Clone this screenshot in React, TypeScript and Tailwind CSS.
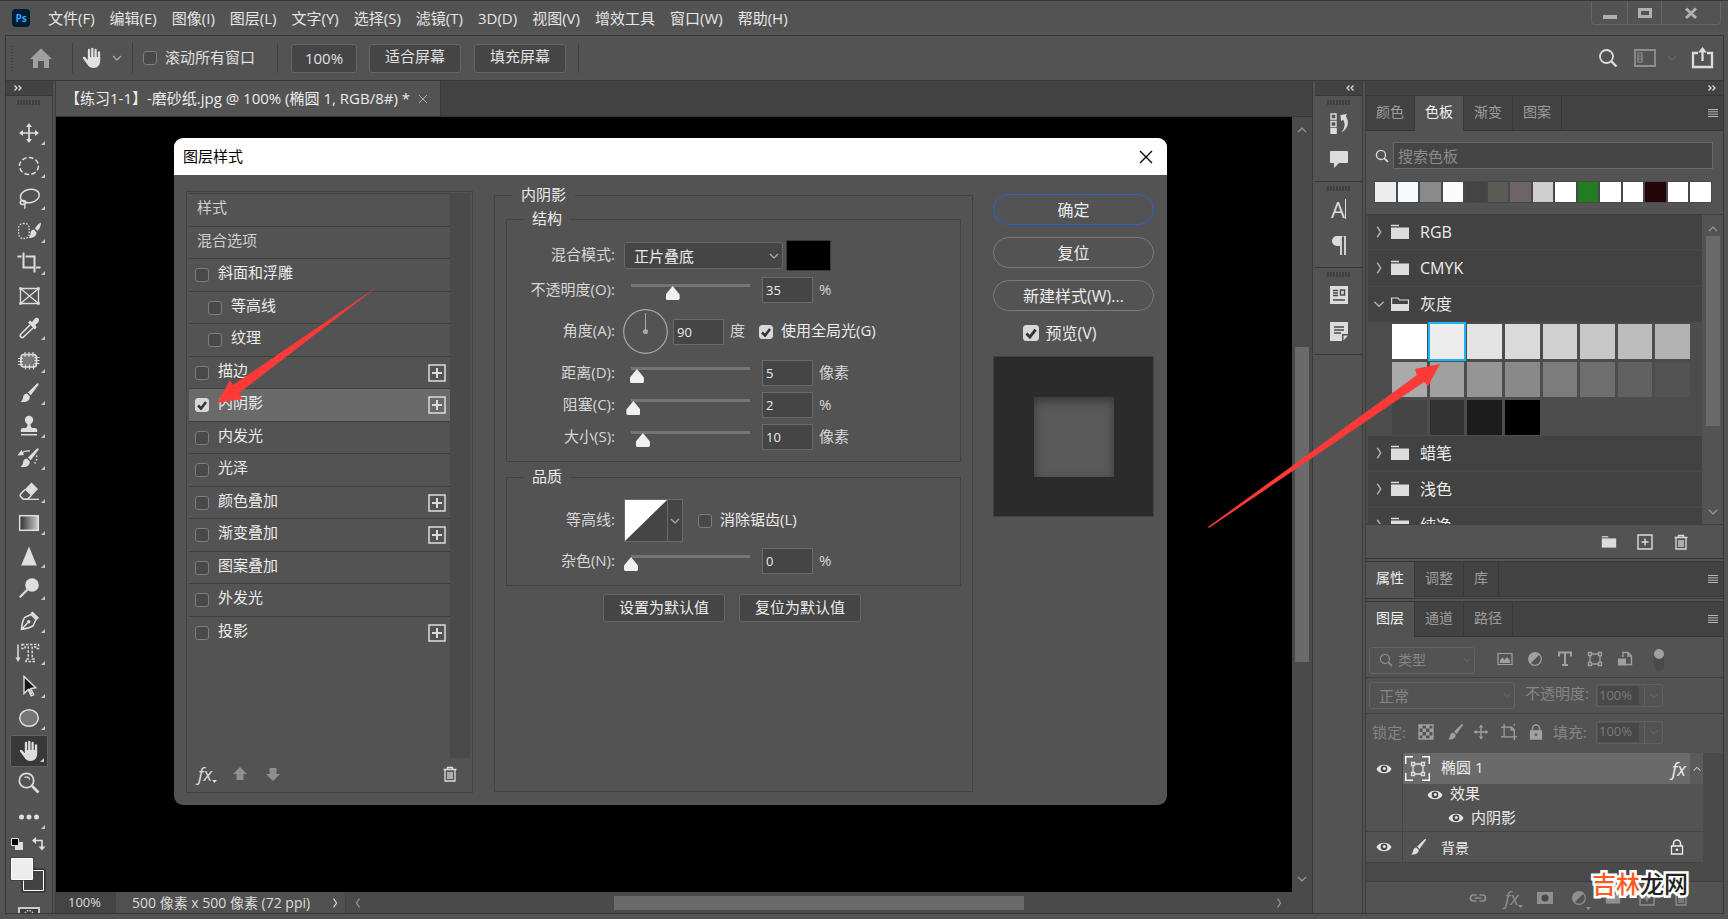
import React from 'react'

type IconProps = { className?: string; children?: React.ReactNode; box?: string }

const Icon = ({ className = 'size-6', box = '0 0 24 24', children }: IconProps) => (
  <svg viewBox={box} className={`shrink-0 ${className}`} fill="none" stroke="currentColor" strokeWidth="1.5" aria-hidden="true">
    {children}
  </svg>
)

const Chevron = ({ dir = 'down', className = 'size-3' }: { dir?: 'down' | 'up' | 'left' | 'right'; className?: string }) => {
  const paths = {
    down: 'M2 4l4 4 4-4',
    up: 'M2 8l4-4 4 4',
    left: 'M7.5 1.500L4.500 6l3 4.500',
    right: 'M4.500 1.500L7.500 6l-3 4.500',
  }
  return (
    <Icon className={className} box="0 0 12 12">
      <path d={paths[dir]} strokeWidth="1.2" />
    </Icon>
  )
}

const DoubleChevron = ({ left = false }: { left?: boolean }) => (
  <Icon className="h-[6px] w-[8px] text-[#dcdcdc]" box="0 0 8 6">
    <path d={left ? 'M3.500 .5L1 3l2.500 2.500M7.500 .5L5 3l2.500 2.500' : 'M.5 .5L3 3 .5 5.500M4.500 .5L7 3 4.500 5.500'} strokeWidth="1.300" />
  </Icon>
)

const Grip = () => (
  <div className="h-[5px] w-6 bg-[repeating-linear-gradient(90deg,#3f3f3f_0_2px,transparent_2px_3px)]" />
)

const brushPath = (
  <g fill="currentColor" stroke="none">
    <path d="M21.500 2.500c-.8-.4-1.500 0-2 .5L11 11.500l2.800 2.800L21 4.500c.5-.8.9-1.500.5-2z" />
    <path d="M10 12.500c-3 .2-3.600 2.200-4 4.500-.3 1.800-1.500 3.200-2.600 3.800 4 .8 9.300 0 9.500-5.400z" />
  </g>
)

const handPath = (
  <g>
    <path d="M9 4v9M12.300 3v9M15.600 4v9M19 6.500v8" strokeWidth="2.300" strokeLinecap="round" />
    <path fill="currentColor" stroke="none" d="M7.900 11h12.200v4c0 4-2.500 7-6.500 7-3 0-4.800-1.200-6.300-3.700L3 12.600c-.8-1.500 1-2.700 2.200-1.400l2.700 3z" />
  </g>
)

const FolderIcon = ({ open = false, className = 'h-4 w-5' }: { open?: boolean; className?: string }) => (
  <Icon className={className} box="0 0 20 16">
    {open ? (
      <path d="M1.600 14V2h6.400l1.500 2h9v5" strokeWidth="1.200" />
    ) : (
      <path d="M1 1.500h8" strokeWidth="1.500" />
    )}
    {open ? (
      <path d="M1 8h18v7H1z" fill="currentColor" stroke="none" />
    ) : (
      <path d="M1 3.500h18V15H1z" fill="currentColor" stroke="none" />
    )}
  </Icon>
)

const TrashIcon = ({ className = 'size-4' }: { className?: string }) => (
  <Icon className={className} box="0 0 16 16">
    <path d="M1.500 3.500h13M5.500 3V1.500h5V3M3 4v11h10V4M6 6v7M8 6v7M10 6v7" strokeWidth="1.300" />
  </Icon>
)

const PlusBox = ({ className = 'size-4' }: { className?: string }) => (
  <Icon className={className} box="0 0 16 16">
    <path d="M1 1h14v14H1zM8 4.500v7M4.500 8h7" strokeWidth="1.4" />
  </Icon>
)

const SearchIcon = ({ className = 'size-5' }: { className?: string }) => (
  <Icon className={className} box="0 0 20 20">
    <circle cx="8.500" cy="8.500" r="6.500" strokeWidth="1.800" />
    <path d="M13 13l5.500 5.500" strokeWidth="2.400" />
  </Icon>
)

const EyeIcon = () => (
  <Icon className="h-[10px] w-4 text-[#e6e6e6]" box="0 0 16 10">
    <path d="M.5 5C3-.8 13-.8 15.500 5 13 10.800 3 10.800 .5 5z" fill="currentColor" stroke="none" />
    <circle cx="8" cy="4.800" r="3.400" fill="#484848" stroke="none" />
    <circle cx="8.300" cy="4.400" r="1.500" fill="currentColor" stroke="none" />
  </Icon>
)

const ShapeIcon = ({ className = 'size-4' }: { className?: string }) => (
  <Icon className={className} box="0 0 16 16">
    <path d="M3 4v8M13 4v8M4 3h8M4 13h8" strokeWidth="1.300" />
    <path d="M1.500 1.500h3v3h-3zM11.500 1.500h3v3h-3zM1.500 11.500h3v3h-3zM11.500 11.500h3v3h-3z" strokeWidth="1.300" />
  </Icon>
)

const AdjustIcon = ({ className = 'size-4' }: { className?: string }) => (
  <Icon className={className} box="0 0 16 16">
    <circle cx="8" cy="8" r="6.300" strokeWidth="1.200" />
    <path d="M12.500 3.500A6.300 6.300 0 1 0 3.500 12.500z" fill="currentColor" stroke="none" />
  </Icon>
)

const LockIcon = ({ solid = false, className = 'size-4' }: { solid?: boolean; className?: string }) => (
  <Icon className={className} box="0 0 16 16">
    <path d="M4.500 7V4.500a3.500 3.500 0 0 1 7 0V7" strokeWidth="1.500" />
    <path d="M2.500 7h11v8h-11z" fill={solid ? 'currentColor' : 'none'} strokeWidth="1.300" />
    <circle cx="8" cy="10.800" r="1.300" fill={solid ? '#535353' : 'currentColor'} stroke="none" />
  </Icon>
)

const MoveIcon = ({ className = 'size-6' }: { className?: string }) => (
  <Icon className={className}>
    <path d="M12 4v16M4 12h16" strokeWidth="1.700" />
    <path fill="currentColor" stroke="none" d="M12 2l3 4H9zM12 22l3-4H9zM2 12l4-3v6zM22 12l-4-3v6z" />
  </Icon>
)

const tools: { name: string; icon: React.ReactNode; corner?: boolean; active?: boolean }[] = [
  { name: '移动工具', corner: true, icon: <MoveIcon /> },
  { name: '椭圆选框工具', corner: true, icon: <Icon><ellipse cx="12" cy="12" rx="9.500" ry="8.500" strokeDasharray="4.700 2.300" /></Icon> },
  {
    name: '套索工具',
    corner: true,
    icon: (
      <Icon>
        <ellipse cx="12.800" cy="10" rx="9.600" ry="6.600" transform="rotate(-12 12.800 10)" />
        <ellipse cx="6" cy="16.500" rx="2.800" ry="1.900" />
        <path d="M6.500 18c2 1.500 2 3 .8 4.600" strokeWidth="1.300" />
      </Icon>
    ),
  },
  {
    name: '快速选择工具',
    corner: true,
    icon: (
      <Icon>
        <rect x="1.700" y="4.500" width="10.500" height="15" rx="4.500" strokeDasharray="1.500 1.500" strokeWidth="1.300" />
        <path d="M24 3.500c-3 1.500-4.800 4-6 6l2.500 2.500C22.500 9.500 24 7 24 3.500zM17 10.500c-2 0-3.300 1.500-3.500 4-.1 1.500-.8 3-2 4.500 4 .3 8-1.500 8-5.500z" fill="currentColor" stroke="none" />
      </Icon>
    ),
  },
  { name: '裁剪工具', corner: true, icon: <Icon><path d="M.5 5.500h4M6.500 1.500v15h10M8.500 5.500H17.500v16M19 16.500h4.500" strokeWidth="2" /></Icon> },
  {
    name: '图框工具',
    icon: (
      <Icon>
        <path d="M3.500 4.500h18v15h-18zM3.500 4.500l18 15M21.500 4.500l-18 15" strokeWidth="1.300" />
        <path d="M2.500 3.500h2v2h-2zM20.500 3.500h2v2h-2zM2.500 18.500h2v2h-2zM20.500 18.500h2v2h-2z" fill="currentColor" strokeWidth=".5" />
      </Icon>
    ),
  },
  {
    name: '吸管工具',
    corner: true,
    icon: (
      <Icon>
        <path d="M13 9L4 18c-2 2.500.5 4.500 2.500 3L16 12" strokeWidth="1.600" />
        <path d="M11 6.500l2-2 2 1.500 2.500-3c3-3 6 .5 3.700 3.500l-3 2.500 1.500 2.500-2 2z" fill="currentColor" stroke="none" />
      </Icon>
    ),
  },
  {
    name: '修补工具',
    corner: true,
    icon: (
      <Icon>
        <rect x="4" y="5.500" width="15.500" height="12.500" rx="3" fill="#777" strokeWidth="1.600" />
        <path d="M8 3v5M12 3v5M16 3v5M8.500 15.500v5M12.500 15.500v5M16.500 15.500v5M1 9.500h5M1 12.500h5M1 15.500h5M17.500 8.500h5M17.500 11.500h5M17.500 14.500h5" strokeWidth="1.100" />
      </Icon>
    ),
  },
  { name: '画笔工具', corner: true, icon: <Icon>{brushPath}</Icon> },
  {
    name: '仿制图章工具',
    corner: true,
    icon: (
      <Icon>
        <circle cx="12" cy="6" r="4.200" fill="currentColor" stroke="none" />
        <path d="M10.500 9h3c0 3 0 4 2 5h2.500c1.500 0 2.200 1 2.200 2.500v1.500H3.800v-1.500C3.800 15 4.500 14 6 14h2.500c2-1 2-2 2-5z" fill="currentColor" stroke="none" />
        <path d="M4 20.700h16" />
      </Icon>
    ),
  },
  {
    name: '历史记录画笔工具',
    corner: true,
    icon: (
      <Icon>
        {brushPath}
        <path d="M4 7.500c2-2 5-3 9-2.500" strokeWidth="1.300" />
        <path d="M.5 9.500L4.500 4l2.500 5z" fill="currentColor" stroke="none" />
        <path d="M19.500 9.500c1 3 0 7-3.500 9" strokeWidth="1.500" strokeDasharray="1.500 2" />
      </Icon>
    ),
  },
  {
    name: '橡皮擦工具',
    corner: true,
    icon: (
      <Icon>
        <path d="M14.500 3.500l6.500 6.500-6.500 7-6.700-6.500z" fill="currentColor" stroke="none" />
        <path d="M8 10.500l-4.500 4.700c-.7.800-.7 1.500 0 2.200l2.800 2.800h4.200l4-4" strokeWidth="1.500" />
        <path d="M6 20.300h16" strokeWidth="1.300" />
      </Icon>
    ),
  },
  {
    name: '渐变工具',
    corner: true,
    icon: (
      <Icon>
        <defs>
          <linearGradient id="toolGradient"><stop offset="0" stopColor="#2c2c2c" /><stop offset="1" stopColor="#d0d0d0" /></linearGradient>
        </defs>
        <rect x="2.700" y="4.700" width="18.600" height="14.600" fill="url(#toolGradient)" />
      </Icon>
    ),
  },
  { name: '锐化工具', corner: true, icon: <Icon><path d="M12 2.500L19.800 21.500H4.200z" fill="currentColor" stroke="none" /></Icon> },
  { name: '减淡工具', corner: true, icon: <Icon><circle cx="15" cy="9" r="6.800" fill="currentColor" stroke="none" /><path d="M10.500 13.500L2.800 21.300" strokeWidth="2.200" /></Icon> },
  {
    name: '钢笔工具',
    corner: true,
    icon: (
      <Icon>
        <path d="M4.500 20.500c.2-5 .7-8 3-12l6.500-3 5 5-3 6.500c-4 2.300-7 3-11.500 3.500zM4.500 20.500l6-6.500" strokeWidth="1.500" />
        <circle cx="11.700" cy="12.800" r="1.700" fill="currentColor" stroke="none" />
        <path d="M13.500 4l2-1.500 6.500 6.200-1.800 2z" fill="currentColor" stroke="none" />
      </Icon>
    ),
  },
  {
    name: '直排文字蒙版工具',
    corner: true,
    icon: (
      <Icon className="h-6 w-7" box="-2 0 28 24">
        <path d="M1 3.500v14" strokeWidth="1.500" />
        <path d="M-1.500 16.500h5L1 21z" fill="currentColor" stroke="none" />
        <path d="M5 3.500h16.500v4h-3v-1.500h-3.300v12h2v2.500H9v-2.500h2.300V6H8v1.500H5z" strokeDasharray="2.500 1.500" strokeWidth="1.400" />
      </Icon>
    ),
  },
  { name: '路径选择工具', corner: true, icon: <Icon><path d="M7 2.500v17l4.200-4 3 6.300 2.500-1.200-2.900-6.100 5-.8z" fill="#161616" strokeWidth="1.400" /><path d="M12 15l2.500 5.500" strokeWidth="2.200" /></Icon> },
  { name: '椭圆工具', corner: true, icon: <Icon><ellipse cx="12" cy="12" rx="9.300" ry="8.300" fill="#777" /></Icon> },
  { name: '抓手工具', corner: true, active: true, icon: <Icon>{handPath}</Icon> },
  {
    name: '缩放工具',
    icon: (
      <Icon>
        <circle cx="9.500" cy="9.500" r="7.200" strokeWidth="1.700" />
        <path d="M15 15l6.500 6.500" strokeWidth="2.700" />
        <path d="M7.500 6.500c2-1.200 4.500-.5 5.300 2" strokeWidth="1.200" />
      </Icon>
    ),
  },
]

const Toolbar = () => (
  <aside className="flex w-[47px] shrink-0 flex-col overflow-hidden border-r border-[#3a3a3a]">
    <div className="flex h-[15px] shrink-0 items-center border-b border-[#383838] bg-[#424242] pl-2">
      <DoubleChevron />
    </div>
    <div className="flex h-[21px] shrink-0 justify-center pt-1"><Grip /></div>
    <div className="flex h-[682px] shrink-0 flex-col justify-between">
      {tools.map((t) => (
        <button
          key={t.name}
          aria-label={t.name}
          className={`relative mx-1 flex h-8 items-center justify-center text-[#dedede] ${t.active ? 'rounded-xs border border-[#626262] bg-[#383838]' : ''}`}
        >
          {t.icon}
          {t.corner && <Icon className="absolute bottom-1 right-[3px] size-1" box="0 0 4 4"><path d="M4 0v4H0z" fill="#c8c8c8" stroke="none" /></Icon>}
        </button>
      ))}
    </div>
    <button aria-label="编辑工具栏" className="relative mx-1 flex h-9 shrink-0 items-center justify-center text-[#dedede]">
      <Icon><g fill="currentColor" stroke="none"><circle cx="4.500" cy="12" r="2.500" /><circle cx="12" cy="12" r="2.500" /><circle cx="19.500" cy="12" r="2.500" /></g></Icon>
      <Icon className="absolute bottom-[6px] right-[3px] size-1" box="0 0 4 4"><path d="M4 0v4H0z" fill="#c8c8c8" stroke="none" /></Icon>
    </button>
    <Icon className="ml-1 mt-[2px] h-[14px] w-9 text-[#dedede]" box="0 0 36 14">
      <path d="M5 5h8v8H5z" fill="currentColor" stroke="none" />
      <path d="M1.500 1.500h7v7h-7z" fill="#000" strokeWidth="1" />
      <path d="M24.500 3.500h7.500v7" strokeWidth="1.600" />
      <path d="M26 0v7l-4-3.500zM28.500 9.500h7L32 13.500z" fill="currentColor" stroke="none" />
    </Icon>
    <Icon className="ml-1 mt-[5px] h-[37px] w-9" box="0 0 36 37">
      <path d="M12.500 13.500h22v22h-22z" fill="#404040" stroke="#333" strokeWidth="2" />
      <path d="M13.500 14.500h20v20h-20z" fill="#434343" stroke="#fff" strokeWidth="1" />
      <path d="M.5 1.500h23v23H.5z" fill="#333" stroke="none" />
      <path d="M1.500 2.500h21v21h-21z" fill="#ededed" stroke="#fff" strokeWidth="1" />
    </Icon>
    <Icon className="ml-3 mt-[14px] h-[15px] w-[22px] text-[#c8c8c8]" box="0 0 22 15">
      <path d="M1 1h20v13H1z" fill="#3c3c3c" strokeWidth="2" />
      <circle cx="11" cy="7.500" r="4" strokeDasharray="1.500 1.200" />
    </Icon>
  </aside>
)

const Check = ({ id, checked = false, large = false }: { id: string; checked?: boolean; large?: boolean }) => (
  <span className="relative flex shrink-0">
    <input
      id={id}
      type="checkbox"
      defaultChecked={checked}
      className={`peer appearance-none rounded-[3px] border border-[#7d7d7d] bg-[#494949] checked:border-[#d8d8d8] checked:bg-[#d8d8d8] ${large ? 'size-4' : 'size-[14px]'}`}
    />
    <svg viewBox="0 0 14 14" className="pointer-events-none absolute inset-0 hidden peer-checked:block" fill="none" stroke="#333" strokeWidth="2.500">
      <path d="M3 7.500l3 3L11 4" />
    </svg>
  </span>
)

const menus = ['文件(F)', '编辑(E)', '图像(I)', '图层(L)', '文字(Y)', '选择(S)', '滤镜(T)', '3D(D)', '视图(V)', '增效工具', '窗口(W)', '帮助(H)']

const MenuBar = () => (
  <header className="flex h-[34px] shrink-0 items-center">
    <div className="ml-[7px] flex size-[18px] items-center justify-center rounded-[4px] bg-[#001d34] text-[10px] font-bold text-[#31a8ff]">Ps</div>
    <nav className="ml-[18px] flex flex-1 gap-[15px] whitespace-nowrap text-[15px] text-[#e6e6e6]">
      {menus.map((m) => <button key={m}>{m}</button>)}
    </nav>
    <div className="mr-[3px] flex h-6 self-start divide-x divide-[#666] rounded-b-[4px] border border-t-0 border-[#666] text-[#b0b0b0]">
      <button aria-label="最小化" className="flex w-9 items-center justify-center"><Icon className="h-4 w-[14px]" box="0 0 14 16"><path d="M0 12h14" strokeWidth="4" /></Icon></button>
      <button aria-label="最大化" className="flex w-[34px] items-center justify-center"><Icon className="h-4 w-[14px]" box="0 0 14 16"><path d="M1.500 4.500h11v7h-11z" strokeWidth="3" /></Icon></button>
      <button aria-label="关闭" className="flex w-[58px] items-center justify-center"><Icon className="h-4 w-[14px]" box="0 0 14 16"><path d="M2 3.500l10 9.500M12 3.500L2 13" strokeWidth="3" /></Icon></button>
    </div>
  </header>
)

const Divider = () => <div className="h-[30px] w-px shrink-0 bg-[#404040]" />

const OptionsBar = () => (
  <div className="flex h-[45px] shrink-0 items-center border-b border-[#383838] text-[15px] text-[#e0e0e0]">
    <div className="ml-[5px] h-[25px] w-[2px] bg-[repeating-linear-gradient(180deg,#3f3f3f_0_1px,transparent_1px_3px)]" />
    <button aria-label="主页" className="ml-4 mr-[19px] text-[#a0a0a0]">
      <Icon className="h-[22px] w-6" box="0 0 24 22"><path d="M12 1.500L23 12h-3v9h-5v-7H9v7H4v-9H1z" fill="currentColor" stroke="none" /></Icon>
    </button>
    <Divider />
    <button aria-label="抓手工具" className="ml-[7px] flex items-center gap-[7px]">
      <Icon>{handPath}</Icon>
      <Chevron className="size-3 text-[#b0b0b0]" />
    </button>
    <div className="ml-[9px]"><Divider /></div>
    <div className="ml-[10px] mr-[22px] flex items-center gap-2">
      <Check id="scroll-all" />
      <label htmlFor="scroll-all" className="pb-[2px]">滚动所有窗口</label>
    </div>
    <Divider />
    <button className="ml-[13px] h-[29px] w-[66px] rounded-[3px] border border-[#666] bg-[#454545]">100%</button>
    <button className="ml-3 h-[29px] w-[92px] rounded-[3px] border border-[#666] bg-[#454545] pb-[3px]">适合屏幕</button>
    <button className="ml-[13px] mr-3 h-[29px] w-[92px] rounded-[3px] border border-[#666] bg-[#454545] pb-[3px]">填充屏幕</button>
    <Divider />
    <div className="ml-auto mr-[9px] flex items-center text-[#dcdcdc]">
      <button aria-label="搜索"><SearchIcon /></button>
      <button aria-label="工作区" className="ml-4 flex items-center gap-[10px] text-[#8f8f8f]">
        <Icon className="h-[18px] w-[22px]" box="0 0 22 18"><path d="M1 1h20v16H1z" strokeWidth="1.800" /><path d="M4 4h4v9H4zM4 7h4M4 10h4" strokeWidth="1.200" /></Icon>
        <Chevron className="size-3 text-[#686868]" />
      </button>
      <button aria-label="共享" className="ml-[13px]">
        <Icon className="h-[22px] w-[23px]" box="0 0 23 22"><path d="M7 6H2v14h19V6h-5M11.500 14V5" strokeWidth="2.300" /><path d="M11.500 0l4.500 5.500H7z" fill="currentColor" stroke="none" /></Icon>
      </button>
    </div>
  </div>
)

const effects = [
  { name: '斜面和浮雕' },
  { name: '等高线', indent: true },
  { name: '纹理', indent: true },
  { name: '描边', plus: true },
  { name: '内阴影', plus: true, active: true },
  { name: '内发光' },
  { name: '光泽' },
  { name: '颜色叠加', plus: true },
  { name: '渐变叠加', plus: true },
  { name: '图案叠加' },
  { name: '外发光' },
  { name: '投影', plus: true },
]

const StyleList = () => (
  <section className="mt-4 flex w-[287px] flex-col border border-[#434343] p-[2px] pt-px">
    <div className="flex flex-1">
      <ul className="flex-1 text-[15px] text-[#ececec]">
        <li className="flex h-[33px] items-center border-t border-[#3e3e3e] pb-[6px] pl-2 text-[#cfcfcf]">样式</li>
        <li className="flex h-8 items-center border-t border-[#3e3e3e] pb-[5px] pl-2 text-[#cfcfcf]">混合选项</li>
        {effects.map((e) => (
          <li
            key={e.name}
            className={`flex items-center gap-[9px] border-t border-[#3e3e3e] pr-1 odd:h-[33px] even:h-8 ${e.indent ? 'pl-[19px]' : 'pl-[6px]'} ${e.active ? 'bg-[#6a6a6a]' : ''}`}
          >
            <Check id={e.name} checked={e.active} />
            <label htmlFor={e.name} className="flex-1 pb-[5px]">{e.name}</label>
            {e.plus && (
              <button aria-label={`添加${e.name}`}>
                <Icon className="size-[18px] text-[#dcdcdc]" box="0 0 18 18"><path d="M1 1h16v16H1z" strokeWidth="1.500" /><path d="M9 4v10M4 9h10" strokeWidth="2" /></Icon>
              </button>
            )}
          </li>
        ))}
      </ul>
      <div className="w-5 bg-[#4a4a4a]" />
    </div>
    <div className="flex h-8 items-center pl-[9px] pr-3 text-[#dcdcdc]">
      <button className="flex items-end text-[18px] italic leading-5">
        fx<Icon className="mb-[1px] h-[3px] w-[5px]" box="0 0 5 3"><path d="M0 0h5L2.500 3z" fill="currentColor" stroke="none" /></Icon>
      </button>
      <button aria-label="上移" className="ml-[15px] text-[#8f8f8f]"><Icon className="size-4" box="0 0 16 16"><path d="M8 1l7 7h-3.500v6h-7V8H1z" fill="currentColor" stroke="none" /></Icon></button>
      <button aria-label="下移" className="ml-[17px] text-[#8f8f8f]"><Icon className="size-4" box="0 0 16 16"><path d="M8 15l7-7h-3.500V2h-7v6H1z" fill="currentColor" stroke="none" /></Icon></button>
      <button aria-label="删除" className="ml-auto"><TrashIcon className="size-4" /></button>
    </div>
  </section>
)

const fieldInput = 'h-[26px] w-[51px] border border-[#6a6a6a] bg-[#454545] pl-[3px] text-[13px] text-[#ececec] outline-none'

const SliderRow = ({ id, label, value, unit }: { id: string; label: string; value: number; unit: string }) => (
  <div className="flex h-[26px] items-center text-[#d6d6d6]">
    <label htmlFor={id} className="mr-[9px] w-[108px] pb-[2px] text-right">{label}</label>
    <div className="relative mr-[5px] h-[26px] w-[133px]">
      <span className="absolute inset-x-[7px] top-[7px] h-[3px] bg-[#757575]" />
      <input
        type="range"
        aria-label={label}
        defaultValue={value}
        className="absolute inset-x-0 top-[9px] h-[14px] w-full appearance-none bg-transparent [&::-webkit-slider-thumb]:h-[14px] [&::-webkit-slider-thumb]:w-[14px] [&::-webkit-slider-thumb]:appearance-none [&::-webkit-slider-thumb]:bg-[#f0f0f0] [&::-webkit-slider-thumb]:[clip-path:polygon(50%_0,100%_60%,100%_92%,92%_100%,8%_100%,0_92%,0_60%)]"
      />
    </div>
    <input id={id} defaultValue={value} className={fieldInput} />
    <span className="ml-[6px] pb-[2px]">{unit}</span>
  </div>
)

const InnerShadow = () => (
  <fieldset className="mb-px mt-[9px] flex-1 border border-[#434343] px-[11px] text-[15px] text-[#ececec]">
    <legend className="ml-[6px] px-[9px] pb-[2px] leading-5">内阴影</legend>
    <fieldset className="mt-[2px] border border-[#434343] pb-[11px] pt-[10px]">
      <legend className="ml-[17px] px-[8px] pb-[2px] leading-5">结构</legend>
      <div className="flex flex-col gap-[6px]">
        <div className="flex h-[31px] items-center text-[#d6d6d6]">
          <label htmlFor="blend" className="mr-[9px] w-[108px] pb-[2px] text-right">混合模式:</label>
          <div className="relative">
            <select id="blend" className="h-[27px] w-[159px] appearance-none rounded-[3px] border border-[#666] bg-[#454545] pl-[9px] leading-6 text-[#ececec]">
              <option>正片叠底</option>
            </select>
            <Chevron className="pointer-events-none absolute right-[3px] top-2 size-3 text-[#b0b0b0]" />
          </div>
          <button aria-label="阴影颜色" className="ml-[3px] h-[31px] w-[45px] border border-[#3a3a3a] bg-black" />
        </div>
        <SliderRow id="opacity" label="不透明度(O):" value={35} unit="%" />
        <div className="flex h-[45px] items-center text-[#d6d6d6]">
          <label htmlFor="angle" className="mr-[8px] w-[108px] pb-[2px] text-right">角度(A):</label>
          <Icon className="size-[45px] text-[#a8a8a8]" box="0 0 45 45">
            <circle cx="22.500" cy="22.500" r="21.800" strokeWidth="1.200" />
            <path d="M22.500 22V4" strokeWidth="1" />
            <circle cx="22.500" cy="22.500" r="2.600" fill="currentColor" stroke="none" />
          </Icon>
          <input id="angle" defaultValue="90" className={`ml-[5px] ${fieldInput}`} />
          <span className="ml-[6px] mr-[14px] pb-[2px]">度</span>
          <Check id="global-light" checked />
          <label htmlFor="global-light" className="ml-2 pb-[2px] text-[#ececec]">使用全局光(G)</label>
        </div>
        <SliderRow id="distance" label="距离(D):" value={5} unit="像素" />
        <SliderRow id="choke" label="阻塞(C):" value={2} unit="%" />
        <SliderRow id="size" label="大小(S):" value={10} unit="像素" />
      </div>
    </fieldset>
    <fieldset className="mt-[4px] border border-[#434343] pb-[11px] pt-[11px]">
      <legend className="ml-[17px] px-[8px] pb-[2px] leading-5">品质</legend>
      <div className="mb-[6px] flex h-[43px] items-center text-[#d6d6d6]">
        <span className="mr-[9px] w-[108px] pb-[2px] text-right">等高线:</span>
        <button aria-label="等高线" className="flex h-[43px] w-[59px] border border-[#6a6a6a] bg-[#454545]">
          <svg viewBox="0 0 42 41" className="h-[41px] w-[42px]" aria-hidden="true"><path d="M0 0h42L0 41z" fill="#fff" /></svg>
          <span className="flex h-full flex-1 items-center justify-center border-l border-[#6a6a6a] text-[#b0b0b0]"><Chevron className="size-3" /></span>
        </button>
        <span className="w-[15px]" />
        <Check id="anti-alias" />
        <label htmlFor="anti-alias" className="ml-2 pb-[2px] text-[#ececec]">消除锯齿(L)</label>
      </div>
      <SliderRow id="noise" label="杂色(N):" value={0} unit="%" />
    </fieldset>
    <div className="mt-2 flex justify-center gap-[14px] pr-[3px]">
      <button className="h-7 w-[122px] rounded-[3px] border border-[#666] bg-[#454545] pb-[3px] leading-6">设置为默认值</button>
      <button className="h-7 w-[122px] rounded-[3px] border border-[#666] bg-[#454545] pb-[3px] leading-6">复位为默认值</button>
    </div>
  </fieldset>
)

const LayerStyleDialog = () => (
  <div role="dialog" aria-label="图层样式" className="absolute left-[118px] top-[21px] flex h-[667px] w-[993px] flex-col overflow-hidden rounded-[9px] bg-[#535353]">
    <div className="flex h-[37px] shrink-0 items-center justify-between bg-white pl-[9px] pr-[14px] text-[15px] text-black">
      <span>图层样式</span>
      <button aria-label="关闭"><Icon className="size-[14px]" box="0 0 14 14"><path d="M1 1l12 12M13 1L1 13" strokeWidth="1.300" /></Icon></button>
    </div>
    <div className="flex flex-1 pb-3 pl-3 pr-[13px]">
      <StyleList />
      <div className="ml-[21px] flex flex-1"><InnerShadow /></div>
      <div className="ml-5 mt-[19px] flex w-[161px] flex-col items-center text-[16px] text-[#ececec]">
        <button className="h-[31px] w-full rounded-full border border-[#2b62c9]">确定</button>
        <button className="mt-3 h-[31px] w-full rounded-full border border-[#7a7a7a]">复位</button>
        <button className="mt-3 h-[31px] w-full rounded-full border border-[#7a7a7a]">新建样式(W)...</button>
        <div className="mt-[9px] flex items-center gap-[7px] pb-[10px] pr-7 leading-[26px]">
          <Check id="preview" checked large />
          <label htmlFor="preview">预览(V)</label>
        </div>
        <div className="flex h-[161px] w-full items-center justify-center border border-[#434343] bg-[#2b2b2b]">
          <div className="size-20 bg-[#595959] shadow-[inset_0_4px_10px_#383838]" />
        </div>
      </div>
    </div>
  </div>
)

const DocumentArea = () => (
  <main className="ml-[2px] flex min-w-0 flex-1 flex-col border-x border-[#3a3a3a]">
    <div className="flex h-9 shrink-0 border-b border-[#383838] bg-[#424242]">
      <div className="flex items-center whitespace-nowrap border-r border-[#383838] bg-[#535353] pl-[9px] pr-3 text-[15px] text-[#ececec]">
        【练习1-1】-磨砂纸.jpg @ 100% (椭圆 1, RGB/8#) *
        <button aria-label="关闭文档" className="ml-2 text-[#a8a8a8]"><Icon className="size-[10px]" box="0 0 10 10"><path d="M1 1l8 8M9 1L1 9" strokeWidth="1" /></Icon></button>
      </div>
    </div>
    <div className="flex min-h-0 flex-1">
      <div className="relative min-w-0 flex-1 bg-black"><LayerStyleDialog /></div>
      <div className="flex w-5 flex-col items-center bg-[#4a4a4a] py-[7px] text-[#9a9a9a]">
        <Chevron dir="up" />
        <div className="mt-[211px] h-[315px] w-[14px] bg-[#6a6a6a]" />
        <div className="mt-auto"><Chevron /></div>
      </div>
    </div>
    <div className="flex h-[21px] shrink-0 items-center bg-[#4a4a4a] text-[#dcdcdc]">
      <span className="flex h-full w-[60px] items-center bg-[#444] pl-3 text-[13px]">100%</span>
      <span className="flex h-full w-[230px] items-center justify-between whitespace-nowrap border-r border-[#434343] bg-[#505050] pl-4 pr-[4px] text-[14px]">
        500 像素 x 500 像素 (72 ppi)
        <Chevron dir="right" />
      </span>
      <span className="ml-[6px] text-[#9a9a9a]"><Chevron dir="left" /></span>
      <div className="ml-[250px] h-[14px] w-[410px] bg-[#6a6a6a]" />
      <span className="ml-auto mr-[27px] text-[#9a9a9a]"><Chevron dir="right" /></span>
    </div>
  </main>
)

const stripButton = 'flex h-9 w-full items-center justify-center'

const IconStrip = () => (
  <aside className="ml-[2px] flex w-12 shrink-0 flex-col border-r border-[#3a3a3a] text-[#dcdcdc]">
    <div className="flex h-[15px] items-center justify-end border-b border-[#383838] bg-[#424242] pr-2"><DoubleChevron left /></div>
    <div className="flex h-[86px] flex-col items-center border-b border-[#383838] pt-1">
      <Grip />
      <button aria-label="历史记录" className={stripButton}>
        <Icon className="size-6">
          <path d="M4 3h5v5H4zM4 10.500h5v5H4z" strokeWidth="1.400" />
          <path d="M3.300 17h6.500v6H3.300z" fill="currentColor" stroke="none" />
          <path d="M13.500 4L20 3l-1.200 2.200c4 6 2 13-4.300 16 3.500-4.500 4-9 1.500-12.500L14 10z" fill="currentColor" stroke="none" />
        </Icon>
      </button>
      <button aria-label="注释" className={stripButton}>
        <Icon className="size-6"><path d="M4 4h16q1 0 1 1v10q0 1-1 1h-8l-5 5v-5H4q-1 0-1-1V5q0-1 1-1z" fill="currentColor" stroke="none" /></Icon>
      </button>
    </div>
    <div className="flex h-[86px] flex-col items-center border-b border-[#383838] pt-1">
      <Grip />
      <button aria-label="字符" className={stripButton}>
        <span className="text-[22px] leading-6">A</span>
        <span className="h-5 w-px bg-[#dcdcdc]" />
      </button>
      <button aria-label="段落" className={stripButton}>
        <Icon className="size-6"><path d="M19 3H10a5 5 0 0 0 0 10h3V4" fill="currentColor" stroke="none" /><path d="M14 3v19M18 3v19" strokeWidth="1.800" /></Icon>
      </button>
    </div>
    <div className="flex h-[87px] flex-col items-center border-b border-[#383838] pt-1">
      <Grip />
      <button aria-label="库" className={stripButton}>
        <Icon className="size-6"><path d="M3 3h18v18H3z" fill="currentColor" stroke="none" /><path d="M6 7.500h5M6 10h5M6 12.500h5M6 17h12M13.500 7h4v5h-4z" stroke="#484848" strokeWidth="1.500" /></Icon>
      </button>
      <button aria-label="注解" className={stripButton}>
        <Icon className="size-6"><path d="M3 3h18v12h-6v7H3z" fill="currentColor" stroke="none" /><path d="M16.500 21.500v-5h4.500z" fill="currentColor" stroke="none" /><path d="M7 8h10M7 11h10M7 14h7" stroke="#484848" strokeWidth="1.300" /></Icon>
      </button>
    </div>
  </aside>
)

const Tabs = ({ items, active }: { items: string[]; active: number }) => (
  <div className="flex h-[35px] shrink-0 items-stretch bg-[#424242] text-[14px] text-[#9d9d9d]">
    {items.map((t, i) => (
      <button
        key={t}
        className={`border-r border-[#383838] px-[10px] pb-[4px] ${i === active ? 'bg-[#535353] text-[#f2f2f2]' : 'border-b'}`}
      >
        {t}
      </button>
    ))}
    <div className="flex flex-1 items-center justify-end border-b border-[#383838] pr-[5px]">
      <button aria-label="面板菜单"><Icon className="h-2 w-[10px] text-[#b8b8b8]" box="0 0 10 8"><path d="M0 .5h10M0 2.800h10M0 5.200h10M0 7.500h10" strokeWidth="1" /></Icon></button>
    </div>
  </div>
)

const recent = ['#ededed', '#f5faff', '#8a8a8a', '#fcfafc', '#444444', '#5b5a57', '#6f6464', '#d0cece', '#ffffff', '#227d22', '#ffffff', '#ffffff', '#240606', '#ffffff', '#ffffff']
const grays = ['#ffffff', '#ededed', '#e3e3e3', '#dadada', '#d0d0d0', '#c7c7c7', '#bdbdbd', '#b3b3b3', '#aaaaaa', '#a0a0a0', '#959595', '#898989', '#7c7c7c', '#6e6e6e', '#616161', '#535353', '#444444', '#333333', '#1c1c1c', '#000000']

const SwatchFolder = ({ name, open = false }: { name: string; open?: boolean }) => (
  <button className="flex h-9 w-full shrink-0 items-center border-b-2 border-[#484848] bg-[#424242] pl-[4px] text-[16px] text-[#ececec]">
    <Chevron dir={open ? 'down' : 'right'} className="size-[14px] text-[#b0b0b0]" />
    <FolderIcon open={open} className="ml-1 h-4 w-5 text-[#dcdcdc]" />
    <span className="ml-[10px]">{name}</span>
  </button>
)

const SwatchPanel = () => (
  <section className="flex h-[463px] shrink-0 flex-col border-b border-[#383838]">
    <Tabs items={['颜色', '色板', '渐变', '图案']} active={1} />
    <div className="mt-[11px] flex items-center gap-1 pl-[9px] pr-[10px]">
      <label htmlFor="swatch-search" aria-label="搜索色板"><SearchIcon className="size-[14px] text-[#dcdcdc]" /></label>
      <input id="swatch-search" placeholder="搜索色板" className="h-[27px] min-w-0 flex-1 border border-[#6a6a6a] bg-[#454545] pl-1 text-[15px] outline-none placeholder:text-[#8c8c8c]" />
    </div>
    <div className="ml-2 mr-[11px] mt-3 flex gap-[2px] bg-[#484848] p-px">
      {recent.map((c, i) => <button key={i} aria-label={c} className="h-5 flex-1" style={{ backgroundColor: c }} />)}
    </div>
    <div className="mt-[11px] flex h-[311px] overflow-hidden border-y border-[#404040]">
      <div className="flex flex-1 flex-col bg-[#4d4d4d] pl-[2px]">
        <SwatchFolder name="RGB" />
        <SwatchFolder name="CMYK" />
        <SwatchFolder name="灰度" open />
        <div className="ml-[24px] mr-[12px] grid h-[113px] shrink-0 grid-cols-8 gap-[3px] py-px">
          {grays.map((c, i) => (
            <button key={c} aria-label={c} className={`h-[35px] ${i === 1 ? 'outline-2 outline-[#1eb4f5]' : ''}`} style={{ backgroundColor: c }} />
          ))}
        </div>
        <SwatchFolder name="蜡笔" />
        <SwatchFolder name="浅色" />
        <SwatchFolder name="纯净" />
      </div>
      <div className="flex w-[21px] flex-col items-center pb-[6px] pt-2 text-[#9a9a9a]">
        <Chevron dir="up" />
        <div className="mt-px h-[190px] w-[14px] bg-[#6a6a6a]" />
        <div className="mt-auto"><Chevron /></div>
      </div>
    </div>
    <div className="flex flex-1 items-center justify-end gap-5 pr-[34px] text-[#dcdcdc]">
      <button aria-label="新建组"><FolderIcon className="h-[14px] w-4" /></button>
      <button aria-label="新建色板"><PlusBox /></button>
      <button aria-label="删除色板"><TrashIcon /></button>
    </div>
  </section>
)

const PercentBox = ({ id }: { id: string }) => (
  <div className="ml-auto mr-[60px] flex h-[23px] w-[67px] rounded-[3px] border border-[#606060]">
    <input id={id} disabled defaultValue="100%" className="m-px w-0 flex-1 bg-[#484848] pl-px text-[13px] text-[#7a7a7a]" />
    <span className="ml-1 flex w-[18px] items-center justify-center border-l border-[#606060] text-[#6e6e6e]"><Chevron className="size-[10px]" /></span>
  </div>
)

const LayersPanel = () => (
  <section className="mt-[2px] flex min-h-0 flex-1 flex-col border-t border-[#383838] text-[15px]">
    <Tabs items={['图层', '通道', '路径']} active={0} />
    <div className="flex h-[41px] shrink-0 items-center border-b border-[#404040] pl-[3px] pt-[6px] text-[#a0a0a0]">
      <div className="relative text-[#8c8c8c]">
        <SearchIcon className="absolute left-[10px] top-[6px] size-[14px]" />
        <select aria-label="筛选类型" disabled className="h-[27px] w-[106px] appearance-none rounded-[3px] border border-[#626262] pl-7 text-[14px] leading-5 text-[#858585]"><option>类型</option></select>
        <Chevron className="pointer-events-none absolute right-[3px] top-2 size-[10px] text-[#6a6a6a]" />
      </div>
      <div className="ml-[22px] flex items-center gap-[14px] pb-[2px]">
        <Icon className="size-4" box="0 0 16 16"><path d="M1 2.500h14v11H1z" strokeWidth="1.200" /><path d="M3 12V9l2.500-2.500 2 2.500L10 6l3 3.500V12z" fill="currentColor" stroke="none" /></Icon>
        <AdjustIcon />
        <Icon className="size-4" box="0 0 16 16"><path d="M2 5.500v-4h12v4M8 2v12.500M5 14h6" strokeWidth="2" /></Icon>
        <ShapeIcon />
        <Icon className="size-4" box="0 0 16 16"><path d="M6 6V1.500h5l3.500 3.500v8.500H9M11 1.500V5h3.500" strokeWidth="1.400" /><path d="M1 7.500h8v7H1z" fill="currentColor" stroke="none" /></Icon>
      </div>
      <div className="ml-[21px] flex h-[22px] w-[10px] rounded-full bg-[#4a4a4a]"><span className="size-[10px] rounded-full bg-[#a0a0a0]" /></div>
    </div>
    <div className="flex h-9 shrink-0 items-center border-b border-[#404040] pl-[3px] text-[#858585]">
      <div className="relative">
        <select aria-label="混合模式" disabled className="h-[27px] w-[146px] appearance-none rounded-[3px] border border-[#626262] pl-[9px] leading-5"><option>正常</option></select>
        <Chevron className="pointer-events-none absolute right-[3px] top-2 size-[10px] text-[#6a6a6a]" />
      </div>
      <label htmlFor="layer-opacity" className="ml-[10px] pb-1">不透明度:</label>
      <PercentBox id="layer-opacity" />
    </div>
    <div className="flex h-[39px] shrink-0 items-center pb-[3px] pl-[6px] text-[#858585]">
      锁定:
      <div className="ml-3 flex items-center gap-[11px] text-[#a0a0a0]">
        <Icon className="size-4" box="0 0 16 16">
          <path d="M1 1h14v14H1z" strokeWidth="1.300" />
          <path d="M1 1h3.500v3.500H1zM8 1h3.500v3.500H8zM4.500 4.500H8V8H4.500zM11.500 4.500H15V8h-3.500zM1 8h3.500v3.500H1zM8 8h3.500v3.500H8zM4.500 11.500H8V15H4.500zM11.500 11.500H15V15h-3.500z" fill="currentColor" stroke="none" />
        </Icon>
        <Icon className="size-5">{brushPath}</Icon>
        <MoveIcon className="-mx-1 size-[18px]" />
        <Icon className="ml-1 size-4" box="0 0 18 18"><path d="M3.500 0v14M0 3.500h12l3 3V18M0 14.500h18M11.500 3.500v3.500H15M15 0v2" strokeWidth="1.400" /></Icon>
        <LockIcon solid />
      </div>
      <label htmlFor="layer-fill" className="ml-[9px]">填充:</label>
      <PercentBox id="layer-fill" />
    </div>
    <div className="flex min-h-0 flex-1 bg-[#4a4a4a] text-[#ececec]">
      <ul className="flex-1">
        <li className="flex h-[79px] border-b border-[#454545] bg-[#535353]">
          <button aria-label="显示椭圆 1" className="flex w-[37px] justify-center border-r border-[#454545] pt-[11px]"><EyeIcon /></button>
          <div className="flex-1">
            <div className="flex h-[31px] items-center bg-[#6a6a6a]">
              <span className="relative ml-[2px] flex size-[25px] items-center justify-center">
                <Icon className="absolute inset-0 size-[25px] text-white" box="0 0 25 25"><path d="M.7 8V.7H8M17 .7h7.300V8M24.300 17v7.300H17M8 24.300H.7V17" strokeWidth="1.400" /></Icon>
                <ShapeIcon className="size-4 text-[#e0e0e0]" />
              </span>
              <span className="ml-[11px] flex-1 pb-[2px]">椭圆 1</span>
              <span className="mr-1 text-[18px] italic leading-5">fx</span>
              <button aria-label="折叠效果" className="flex h-full w-[13px] items-center justify-center bg-[#5b5b5b]"><Chevron dir="up" className="size-[10px]" /></button>
            </div>
            <div className="flex h-[22px] items-center gap-[7px] pl-6 leading-4"><EyeIcon /><span className="pb-[5px]">效果</span></div>
            <div className="flex h-6 items-center gap-[7px] pl-[45px] leading-4"><EyeIcon /><span className="pb-[3px]">内阴影</span></div>
          </div>
        </li>
        <li className="flex h-[31px] border-b border-[#454545] bg-[#535353]">
          <button aria-label="显示背景" className="flex w-[37px] items-center justify-center border-r border-[#454545]"><EyeIcon /></button>
          <div className="flex flex-1 items-center pl-[5px] pr-[18px]">
            <Icon className="size-[20px] text-[#dcdcdc]">{brushPath}</Icon>
            <span className="ml-[13px] flex-1 text-[14px]">背景</span>
            <LockIcon />
          </div>
        </li>
      </ul>
      <div className="w-5" />
    </div>
    <div className="flex h-8 shrink-0 items-center justify-end gap-[18px] border-t border-[#404040] pr-[34px] text-[#8f8f8f]">
      <button aria-label="链接图层"><Icon className="h-4 w-[18px]" box="0 0 18 16"><path d="M7.500 5H4.500a3 3 0 0 0 0 6h3M10.500 5h3a3 3 0 0 1 0 6h-3M5.500 8h7" strokeWidth="1.700" /></Icon></button>
      <button className="relative text-[18px] italic leading-5">fx<Icon className="absolute -right-1 bottom-0 h-[3px] w-[5px]" box="0 0 5 3"><path d="M0 0h5L2.500 3z" fill="currentColor" stroke="none" /></Icon></button>
      <button aria-label="添加蒙版"><Icon className="h-3 w-4" box="0 0 16 12"><path d="M0 0h16v12H0z" fill="currentColor" stroke="none" /><circle cx="8" cy="6" r="3.500" fill="#484848" stroke="none" /></Icon></button>
      <button aria-label="调整图层" className="relative"><AdjustIcon /><Icon className="absolute -bottom-1 -right-1 h-[3px] w-[5px]" box="0 0 5 3"><path d="M0 0h5L2.500 3z" fill="currentColor" stroke="none" /></Icon></button>
      <button aria-label="新建组"><FolderIcon className="h-[14px] w-4" /></button>
      <button aria-label="新建图层"><PlusBox /></button>
      <button aria-label="删除图层"><TrashIcon /></button>
    </div>
  </section>
)

const App = () => {
  return (
    <div className="relative flex h-screen flex-col overflow-hidden border-t border-[#383838] bg-[#535353] pb-[5px] pl-[5px] pr-[4px] font-['Open_Sans','Noto_Sans_CJK_SC',sans-serif]">
      <MenuBar />
      <div className="flex min-h-0 flex-1 flex-col border border-[#383838]">
        <OptionsBar />
        <div className="flex min-h-0 flex-1">
          <Toolbar />
          <DocumentArea />
          <IconStrip />
          <aside className="ml-[2px] flex w-[358px] shrink-0 flex-col border-l border-[#3a3a3a]">
            <div className="flex h-[15px] shrink-0 items-center justify-end border-b border-[#383838] bg-[#424242] pr-[7px]"><DoubleChevron /></div>
            <SwatchPanel />
            <section className="mt-[2px] h-[38px] shrink-0 border-y border-[#383838]">
              <Tabs items={['属性', '调整', '库']} active={0} />
            </section>
            <LayersPanel />
          </aside>
        </div>
      </div>
      {/* pointer arrows over the dialog and the swatches */}
      <svg viewBox="0 0 160 116" className="pointer-events-none absolute left-[217px] top-[286px] h-[116px] w-[160px]" fill="#fd3a38" aria-hidden="true">
        <path d="M160 0L16 98 13 93 0 116l26-4-4-6z" />
      </svg>
      <svg viewBox="0 0 232 164" className="pointer-events-none absolute left-[1208px] top-[363px] h-[164px] w-[232px]" fill="#fd3a38" aria-hidden="true">
        <path d="M0 163L209 11l-2-6L232 0l-12 22-4-4L1 164z" />
      </svg>
      <div className="pointer-events-none absolute bottom-[21px] right-[40px] text-[24px] font-medium leading-7 text-[#222] [-webkit-text-stroke:5px_#fff] [paint-order:stroke_fill]">
        <span className="text-[#ff5a1f]">吉林</span>龙网
      </div>
    </div>
  )
}

export default App
